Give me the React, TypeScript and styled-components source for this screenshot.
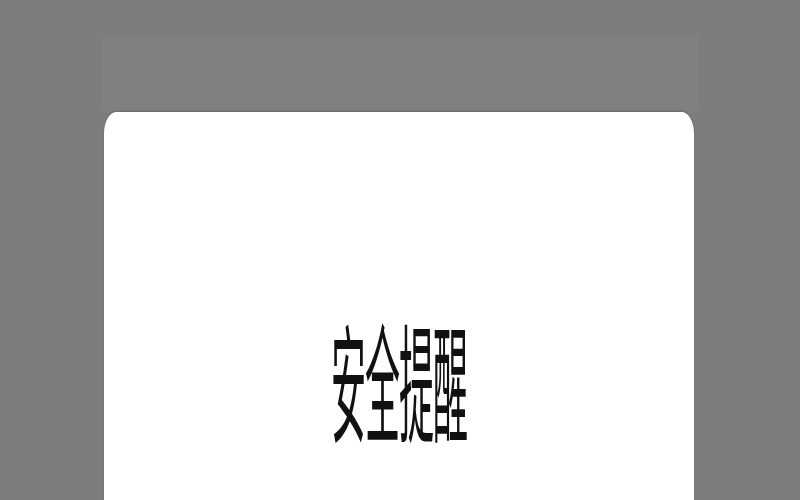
import styled, { createGlobalStyle } from "styled-components";

const Global = createGlobalStyle`
  html, body {
    margin: 0;
    padding: 0;
    background: #7d7d7d;
    overflow: hidden;
  }
`;

const Screen = styled.div`
  width: 800px;
  height: 500px;
  display: flex;
  flex-direction: column;
  padding: 35px 100px 0;
  box-sizing: border-box;
`;

const HeaderBand = styled.div`
  height: 76px;
  flex-shrink: 0;
  background: #808080;
  border-left: 1px solid #7b7b7b;
  border-right: 1px solid #7b7b7b;
`;

const Sheet = styled.div`
  flex: 1;
  margin: 1px 6px 0 4px;
  background: #fff;
  border-radius: 12px 12px 0 0 / 22px 22px 0 0;
  box-shadow: 0 -1px 2px rgba(0, 0, 0, 0.15);
  display: flex;
  justify-content: center;
  padding-top: 249px;
`;

const Title = styled.h1`
  margin: 0;
  font-family: "Noto Sans CJK SC", "Noto Sans", sans-serif;
  font-weight: 400;
  font-size: 35px;
  line-height: 34px;
  height: 34px;
  letter-spacing: -1px;
  color: #111;
  transform: scaleY(3.66);
  transform-origin: center center;
`;

export default function App() {
  return (
    <>
      <Global />
      <Screen>
        <HeaderBand />
        <Sheet>
          <Title>安全提醒</Title>
        </Sheet>
      </Screen>
    </>
  );
}
